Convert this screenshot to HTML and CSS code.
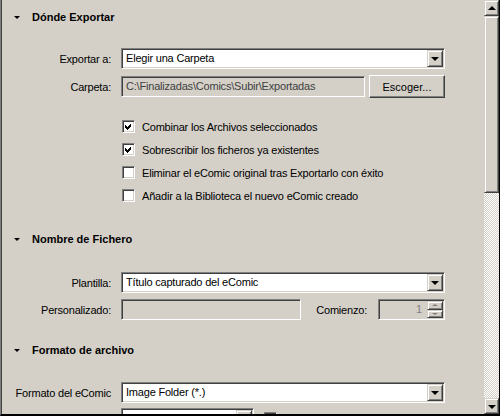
FILE: index.html
```html
<!DOCTYPE html>
<html lang="es">

<head>
    <meta charset="UTF-8">
    <title>Exportar eComics</title>
    <link rel="stylesheet" href="styles.css">
</head>

<body>
    <div class="window">
        <div class="panel">
            <!-- Dónde Exportar -->
            <div class="section-head first"><span class="twisty"></span>Dónde Exportar</div>
            <div class="row gap-14">
                <span class="label">Exportar a:</span>
                <div class="combo wide"><span class="combo-text">Elegir una Carpeta</span><span class="drop"><span class="arrow-down"></span></span></div>
            </div>
            <div class="row row-tall gap-6">
                <span class="label">Carpeta:</span>
                <div class="field readonly folder">C:\Finalizadas\Comics\Subir\Exportadas</div>
                <button class="btn">Escoger...</button>
            </div>
            <div class="checks">
                <div class="check-row"><span class="checkbox checked"><svg width="13" height="13" viewBox="0 0 13 13"><path d="M3 5v3l2 2 4-4V3L5 7z" fill="#000" shape-rendering="crispEdges"/></svg></span>Combinar los Archivos seleccionados</div>
                <div class="check-row"><span class="checkbox checked"><svg width="13" height="13" viewBox="0 0 13 13"><path d="M3 5v3l2 2 4-4V3L5 7z" fill="#000" shape-rendering="crispEdges"/></svg></span>Sobrescribir los ficheros ya existentes</div>
                <div class="check-row"><span class="checkbox"></span>Eliminar el eComic original tras Exportarlo con éxito</div>
                <div class="check-row"><span class="checkbox"></span>Añadir a la Biblioteca el nuevo eComic creado</div>
            </div>

            <!-- Nombre de Fichero -->
            <div class="section-head gap-15"><span class="twisty"></span>Nombre de Fichero</div>
            <div class="row gap-16">
                <span class="label">Plantilla:</span>
                <div class="combo wide"><span class="combo-text">Título capturado del eComic</span><span class="drop"><span class="arrow-down"></span></span></div>
            </div>
            <div class="row gap-6">
                <span class="label">Personalizado:</span>
                <div class="field-area">
                    <div class="field readonly custom"></div>
                    <span class="inline-label">Comienzo:</span>
                    <div class="spin">
                        <span class="spin-value">1</span>
                        <span class="spin-btns">
                            <span class="spin-btn"><span class="mini-up"></span></span>
                            <span class="spin-btn"><span class="mini-down"></span></span>
                        </span>
                    </div>
                </div>
            </div>

            <!-- Formato de archivo -->
            <div class="section-head gap-13"><span class="twisty"></span>Formato de archivo</div>
            <div class="row gap-15">
                <span class="label">Formato del eComic</span>
                <div class="combo wide"><span class="combo-text">Image Folder (*.)</span><span class="drop"><span class="arrow-down"></span></span></div>
            </div>
            <div class="row gap-5">
                <span class="label">Compresión:</span>
                <div class="combo small"><span class="combo-text">Ninguna</span><span class="drop"><span class="arrow-down"></span></span></div>
                <span class="checkbox side"></span>
            </div>
        </div>

        <div class="scrollbar">
            <div class="sb-btn"><span class="arrow-up"></span></div>
            <div class="sb-thumb"></div>
            <div class="sb-track"></div>
            <div class="sb-btn"><span class="arrow-down"></span></div>
        </div>
    </div>
</body>

</html>
```

FILE: styles.css
```css
body {
    margin: 0;
    font-family: "Liberation Sans", Arial, sans-serif;
    font-size: 11px;
    color: #000;
}

.window {
    width: 500px;
    height: 416px;
    box-sizing: border-box;
    display: flex;
    background: #d4d0c8;
    border-left: 1px solid #808080;
    border-right: 1px solid #000;
    border-bottom: 2px solid #000;
}

.panel {
    flex: 1;
    border-left: 1px solid #404040;
    overflow: hidden;
    display: flex;
    flex-direction: column;
}

/* section headers */
.section-head {
    height: 34px;
    flex: none;
    display: flex;
    align-items: center;
    padding-left: 12px;
    font-weight: bold;
}

.twisty {
    width: 0;
    height: 0;
    border-left: 3px solid transparent;
    border-right: 3px solid transparent;
    border-top: 3px solid #000;
    margin-right: 12px;
}

.gap-5 { margin-top: 5px; }
.gap-6 { margin-top: 6px; }
.gap-13 { margin-top: 13px; }
.gap-14 { margin-top: 14px; }
.gap-15 { margin-top: 15px; }
.gap-16 { margin-top: 16px; }

/* form rows */
.row {
    display: flex;
    align-items: center;
    height: 21px;
    flex: none;
    letter-spacing: -0.2px;
}

.row-tall {
    height: 23px;
}

.label {
    width: 109px;
    margin-right: 10px;
    text-align: right;
    white-space: nowrap;
}

.combo,
.field,
.spin,
.checkbox {
    box-sizing: border-box;
    border: 1px solid;
    border-color: #808080 #fff #fff #808080;
    box-shadow: inset 1px 1px #404040, inset -1px -1px #d4d0c8;
}

.combo {
    height: 21px;
    background: #fff;
    display: flex;
    padding: 1px;
}

.combo.wide {
    width: 324px;
}

.combo.small {
    width: 133px;
}

.combo-text {
    flex: 1;
    padding-left: 3px;
    line-height: 17px;
    white-space: nowrap;
    overflow: hidden;
}

.drop,
.sb-btn,
.spin-btn,
.btn,
.sb-thumb {
    box-sizing: border-box;
    background: #d4d0c8;
    border: 1px solid;
    border-color: #d4d0c8 #404040 #404040 #d4d0c8;
    box-shadow: inset 1px 1px #fff, inset -1px -1px #808080;
}

.drop {
    width: 16px;
    height: 17px;
    display: flex;
    align-items: center;
    justify-content: center;
}

.arrow-down,
.arrow-up {
    width: 0;
    height: 0;
    border-left: 4px solid transparent;
    border-right: 4px solid transparent;
}

.arrow-down {
    border-top: 4px solid #000;
    margin-top: 1px;
}

.arrow-up {
    border-bottom: 4px solid #000;
    margin-bottom: 1px;
}

.field {
    height: 21px;
    padding-left: 4px;
    line-height: 19px;
    white-space: nowrap;
    overflow: hidden;
}

.readonly {
    background: #d4d0c8;
    color: #404040;
}

.folder {
    width: 244px;
    margin-right: 4px;
}

.btn {
    width: 76px;
    height: 23px;
    padding: 0;
    font: inherit;
    color: #000;
    border-color: #fff #404040 #404040 #fff;
    box-shadow: inset -1px -1px #808080;
}

/* checkboxes */
.checks {
    margin-top: 17px;
    padding-left: 120px;
    flex: none;
    letter-spacing: -0.2px;
}

.check-row {
    height: 23px;
    display: flex;
    align-items: center;
    white-space: nowrap;
}

.checkbox {
    width: 13px;
    height: 13px;
    background: #fff;
    margin-right: 7px;
    position: relative;
    flex: none;
}

.checkbox svg {
    position: absolute;
    left: -1px;
    top: -1px;
}

.checkbox.side {
    margin-left: 10px;
}

/* personalizado / comienzo */
.field-area {
    width: 324px;
    display: flex;
    align-items: center;
}

.custom {
    width: 180px;
}

.inline-label {
    margin-left: auto;
    margin-right: 11px;
}

.spin {
    width: 67px;
    height: 21px;
    background: #d4d0c8;
    display: flex;
    padding: 1px;
}

.spin-value {
    flex: 1;
    text-align: right;
    padding-right: 5px;
    line-height: 17px;
    color: #808080;
}

.spin-btns {
    width: 16px;
    display: flex;
    flex-direction: column;
}

.spin-btn {
    flex: 1;
    display: flex;
    align-items: center;
    justify-content: center;
}

.mini-up,
.mini-down {
    width: 0;
    height: 0;
    border-left: 3px solid transparent;
    border-right: 3px solid transparent;
}

.mini-up {
    border-bottom: 2px solid #808080;
}

.mini-down {
    border-top: 2px solid #808080;
}

/* scrollbar */
.scrollbar {
    width: 15px;
    display: flex;
    flex-direction: column;
}

.sb-btn {
    height: 16px;
    flex: none;
    display: flex;
    align-items: center;
    justify-content: center;
}

.sb-thumb {
    height: 177px;
    flex: none;
}

.sb-track {
    flex: 1;
    background: repeating-conic-gradient(#fff 0 25%, #d4d0c8 0 50%) 0 0 / 2px 2px;
}
```
